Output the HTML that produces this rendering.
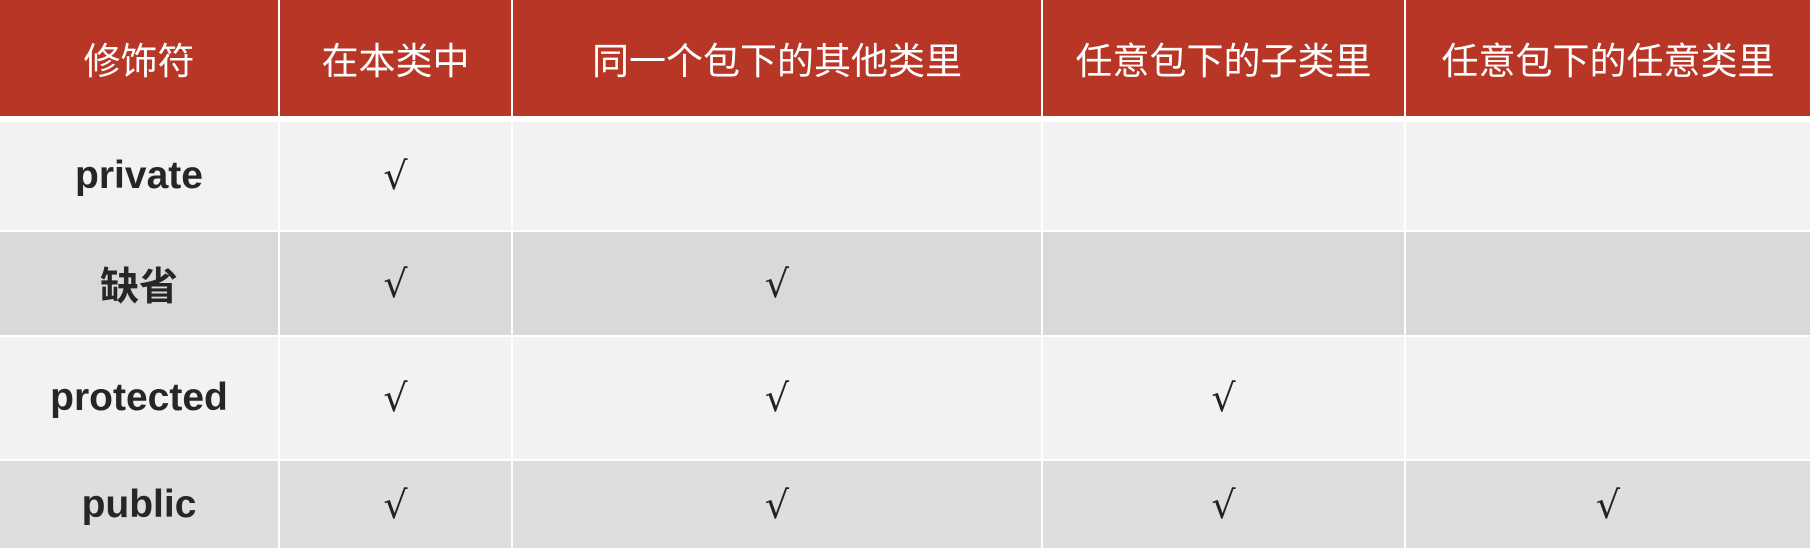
<!DOCTYPE html>
<html><head><meta charset="utf-8"><style>
body{margin:0;width:1810px;height:550px;background:#fff;overflow:hidden;position:relative;font-family:"Liberation Sans","Noto Sans CJK SC",sans-serif}
.c{position:absolute;display:flex;align-items:center;justify-content:center;box-sizing:border-box}
.h{background:#b83626;color:#fff;font-size:37px;top:0;height:116px}
.b{font-weight:bold;font-size:39px;color:#262626}
.k{font-size:38px;color:#222;font-family:"DejaVu Sans",sans-serif}
</style></head><body>
<div class="c h" style="left:0;width:278px">修饰符</div>
<div class="c h" style="left:280px;width:231px">在本类中</div>
<div class="c h" style="left:513px;width:528px">同一个包下的其他类里</div>
<div class="c h" style="left:1043px;width:361px">任意包下的子类里</div>
<div class="c h" style="left:1406px;width:404px">任意包下的任意类里</div>
<div id="rows"></div>
<script>
var rows=[[122,108,'#f2f2f2','private',1,0,0,0],[232,103,'#d9d9d9','缺省',1,1,0,0],[337,122,'#f2f2f2','protected',1,1,1,0],[461,87,'#dedede','public',1,1,1,1]];
var cols=[[0,278],[280,231],[513,528],[1043,361],[1406,404]];
var h='';
rows.forEach(function(r){cols.forEach(function(c,i){
var t=i==0?'<span class="b">'+r[3]+'</span>':(r[3+i]?'<span class="k">√</span>':'');
h+='<div class="c" style="left:'+c[0]+'px;width:'+c[1]+'px;top:'+r[0]+'px;height:'+r[1]+'px;background:'+r[2]+'">'+t+'</div>';});});
document.getElementById('rows').innerHTML=h;
</script>
</body></html>
